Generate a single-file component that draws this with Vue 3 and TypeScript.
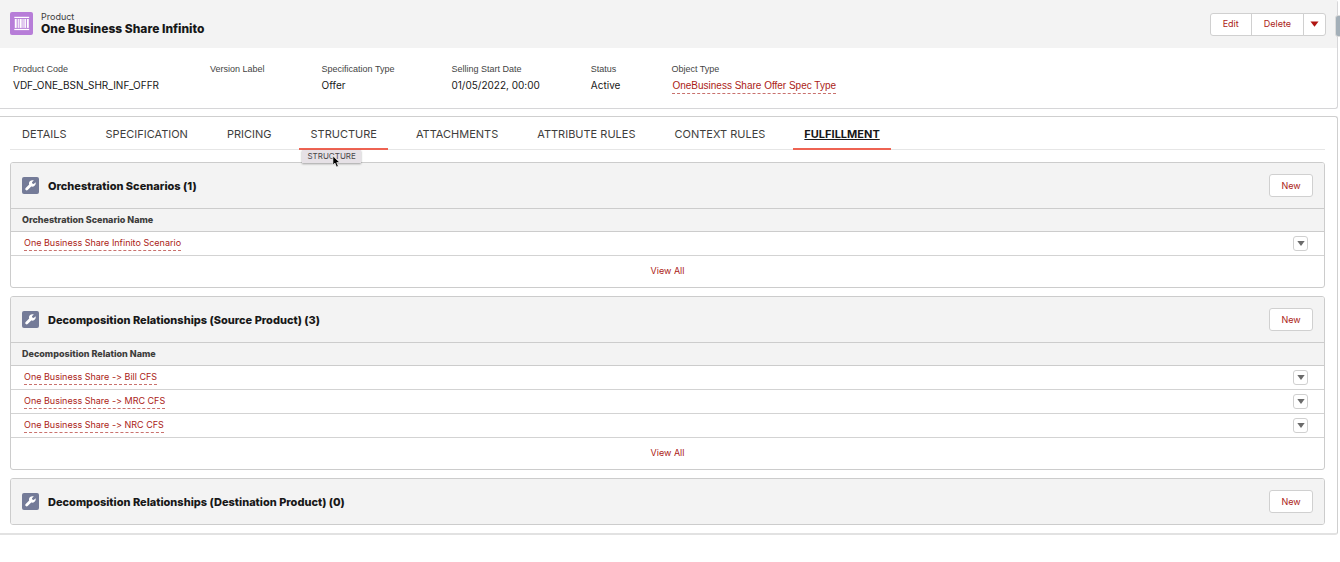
<script setup lang="ts">
interface Field {
  label: string
  value: string
  link?: boolean
}

interface RelatedList {
  title: string
  column?: string
  rows: string[]
}

const fields: Field[] = [
  { label: 'Product Code', value: 'VDF_ONE_BSN_SHR_INF_OFFR' },
  { label: 'Version Label', value: '' },
  { label: 'Specification Type', value: 'Offer' },
  { label: 'Selling Start Date', value: '01/05/2022, 00:00' },
  { label: 'Status', value: 'Active' },
  { label: 'Object Type', value: 'OneBusiness Share Offer Spec Type', link: true },
]

const tabs: string[] = [
  'DETAILS',
  'SPECIFICATION',
  'PRICING',
  'STRUCTURE',
  'ATTACHMENTS',
  'ATTRIBUTE RULES',
  'CONTEXT RULES',
  'FULFILLMENT',
]
const activeTab = 'FULFILLMENT'
const hoveredTab = 'STRUCTURE'

const lists: RelatedList[] = [
  {
    title: 'Orchestration Scenarios (1)',
    column: 'Orchestration Scenario Name',
    rows: ['One Business Share Infinito Scenario'],
  },
  {
    title: 'Decomposition Relationships (Source Product) (3)',
    column: 'Decomposition Relation Name',
    rows: [
      'One Business Share -> Bill CFS',
      'One Business Share -> MRC CFS',
      'One Business Share -> NRC CFS',
    ],
  },
  { title: 'Decomposition Relationships (Destination Product) (0)', rows: [] },
]
</script>

<template>
  <main class="page">
    <section class="record">
      <header class="record-head">
        <span class="record-icon">
          <svg viewBox="0 0 24 24" width="23" height="23" aria-hidden="true">
            <g fill="#fff">
              <rect x="4.500" y="5" width="15.500" height="1.300" />
              <rect x="4.500" y="17.600" width="15.500" height="1.300" />
              <rect x="5" y="7.300" width="2" height="9.300" />
              <rect x="8" y="7.300" width="1.200" height="9.300" />
              <rect x="10" y="7.300" width="2.200" height="9.300" />
              <rect x="13" y="7.300" width="1.200" height="9.300" />
              <rect x="15" y="7.300" width="1.600" height="9.300" />
              <rect x="17.600" y="7.300" width="2" height="9.300" />
            </g>
          </svg>
        </span>
        <div class="record-name">
          <span class="record-kind">Product</span>
          <h1>One Business Share Infinito</h1>
        </div>
        <div class="actions">
          <button type="button">Edit</button>
          <button type="button">Delete</button>
          <button type="button" class="more" aria-label="More actions">
            <svg viewBox="0 0 10 6" width="9" height="6" aria-hidden="true">
              <path d="M0.500 0.300h9L5 6z" fill="#b01512" />
            </svg>
          </button>
        </div>
      </header>
      <dl class="fields">
        <div v-for="field in fields" :key="field.label" class="field">
          <dt>{{ field.label }}</dt>
          <dd>
            <a v-if="field.link" href="#" class="ref">{{ field.value }}</a>
            <template v-else>{{ field.value }}</template>
          </dd>
        </div>
      </dl>
      <span class="side-handle" aria-hidden="true"></span>
    </section>

    <section class="body">
      <nav class="tabs">
        <a
          v-for="tab in tabs"
          :key="tab"
          href="#"
          class="tab"
          :class="{ active: tab === activeTab, hovered: tab === hoveredTab }"
        >
          {{ tab }}
          <span v-if="tab === hoveredTab" class="tip" role="tooltip">
            {{ tab }}
            <svg class="pointer" viewBox="0 0 10 14" width="9" height="13" aria-hidden="true">
              <path
                d="M1 1v10l2.300-2.200 1.700 4.200 2-.800-1.700-4H8.700z"
                fill="#000"
                stroke="#fff"
                stroke-width="0.700"
              />
            </svg>
          </span>
        </a>
      </nav>

      <article v-for="list in lists" :key="list.title" class="panel">
        <header class="panel-head">
          <span class="panel-icon">
            <svg viewBox="0 0 18 18" width="17" height="17" aria-hidden="true">
              <path
                d="M14.400 5.500l-2 1.900-1.500-.400-.400-1.500 2-1.900c-1.500-.600-3.200-.200-4.200.900-.900 1-1.100 2.300-.700 3.500L3.900 11.700c-.600.600-.600 1.500 0 2.100.600.600 1.500.600 2.100 0l3.800-3.700c1.200.400 2.500.100 3.500-.800 1-1 1.500-2.500 1.100-3.800z"
                fill="#fff"
              />
            </svg>
          </span>
          <h2>{{ list.title }}</h2>
          <button type="button" class="new">New</button>
        </header>
        <template v-if="list.column">
          <table>
            <thead>
              <tr>
                <th scope="col" colspan="2">{{ list.column }}</th>
              </tr>
            </thead>
            <tbody>
              <tr v-for="row in list.rows" :key="row">
                <td><a href="#" class="ref">{{ row }}</a></td>
                <td class="menu-cell">
                  <button type="button" class="row-menu" :aria-label="`Actions for ${row}`">
                    <svg viewBox="0 0 8 5" width="8" height="5" aria-hidden="true">
                      <path d="M0.300 0h7.400L4 5z" fill="#6b6b6b" />
                    </svg>
                  </button>
                </td>
              </tr>
            </tbody>
          </table>
          <footer class="panel-foot"><a href="#">View All</a></footer>
        </template>
      </article>
    </section>
  </main>
</template>

<style>
body {
  margin: 0;
  background: #fff;
}
</style>

<style scoped>
.page {
  font-family: Inter, 'Liberation Sans', sans-serif;
  font-size: 9px;
  line-height: 14px;
  font-variant-ligatures: none;
  font-feature-settings: 'calt' 0;
  color: #181818;
  padding-right: 2px;
  overflow: hidden;
}

h1,
h2,
dl,
dd {
  margin: 0;
}

a {
  color: #ab1b16;
  text-decoration: none;
}

button {
  font: inherit;
  color: #ab1b16;
  background: #fff;
  border: 1px solid #d0d0d0;
  border-radius: 3px;
  padding: 0;
  cursor: pointer;
}

.record {
  position: relative;
  border: 1px solid #d6d6d8;
  border-width: 0 1px 1px 0;
  border-radius: 0 3px 3px 0;
}

.record-head {
  display: flex;
  align-items: center;
  box-sizing: border-box;
  height: 48px;
  padding: 0 11px 2px 10px;
  background: #f3f3f3;
}

.record-icon {
  display: flex;
  border-radius: 2px;
  background: #b77dd8;
}

.record-name {
  margin-left: 8px;
  display: flex;
  flex-direction: column;
}

.record-kind {
  line-height: 11px;
  color: #3c3c3c;
}

h1 {
  font-size: 12px;
  line-height: 14px;
  font-weight: 800;
}

.actions {
  display: flex;
  margin-left: auto;
  padding-top: 2px;
}

.actions button {
  height: 23px;
  padding: 0 12px;
  border-radius: 0;
  margin-left: -1px;
}

.actions button:first-child {
  border-radius: 3px 0 0 3px;
}

.actions .more {
  padding: 0 6px;
  border-radius: 0 3px 3px 0;
}

.side-handle {
  position: absolute;
  top: 15px;
  right: -4px;
  width: 4px;
  height: 20px;
  border: 1px solid #dcdcdc;
  border-radius: 3px 0 0 3px;
  background: #a3afb8;
}

.fields {
  display: flex;
  height: 60px;
  box-sizing: border-box;
  padding: 14px 12px 0 13px;
}

.field {
  padding-right: 51px;
  white-space: nowrap;
}

.field:nth-child(2),
.field:nth-child(3) {
  padding-right: 57px;
}

dt {
  font-family: 'Liberation Sans', sans-serif;
  color: #444;
}

dd {
  margin-top: 2px;
  font-size: 10px;
}

dd .ref {
  margin-left: 1px;
  padding-top: 1px;
  font-family: 'Liberation Sans', sans-serif;
}

.ref {
  display: inline-block;
  border-bottom: 1px dashed #c9716d;
}

.body {
  margin-top: 7px;
  padding: 0 12px 8px 10px;
  border: 1px solid #cfcfcf;
  border-left: 0;
  border-bottom: 2px solid #e2e2e2;
  border-radius: 0 3px 3px 0;
}

.tabs {
  display: flex;
  gap: 17px;
  padding-left: 1px;
  margin-bottom: 12px;
  border-bottom: 1px solid #e6e6e6;
}

.tab {
  position: relative;
  padding: 9px 11px 6px;
  border-bottom: 2px solid transparent;
  margin-bottom: -1px;
  font-size: 11px;
  line-height: 16px;
  color: #3e3e3c;
  white-space: nowrap;
}

.tab.active,
.tab.hovered {
  border-bottom-color: #ee6352;
}

.tab.active {
  font-weight: 700;
  color: #181818;
  text-decoration: underline;
}

.tip {
  position: absolute;
  top: 33px;
  left: 3px;
  z-index: 1;
  padding: 0 5px;
  font-size: 8px;
  line-height: 13px;
  color: #4a484a;
  background: #e6e1e6;
  box-shadow: 0 1px 2px rgba(0, 0, 0, 0.35);
}

.pointer {
  position: absolute;
  left: 30px;
  top: 5px;
}

.panel {
  border: 1px solid #cccccc;
  border-radius: 3px;
  overflow: hidden;
}

.panel + .panel {
  margin-top: 8px;
}

.panel-head {
  display: flex;
  align-items: center;
  height: 45px;
  padding: 0 11px;
  background: #f3f3f3;
}

.panel-icon {
  display: flex;
  border-radius: 2px;
  background: #747b98;
}

h2 {
  margin-left: 9px;
  font-size: 11px;
  line-height: 16px;
  font-weight: 800;
}

.new {
  width: 44px;
  height: 23px;
  margin-left: auto;
}

table {
  width: 100%;
  border-spacing: 0;
}

th {
  height: 22px;
  padding: 0 11px;
  border: 1px solid #cccccc;
  border-width: 1px 0;
  background: #f3f3f3;
  font-weight: 800;
  text-align: left;
  color: #3e3e3c;
}

td {
  height: 23px;
  padding: 0 0 0 13px;
  border-bottom: 1px solid #d3d3d3;
}

.menu-cell {
  width: 31px;
  padding: 0;
}

.row-menu {
  display: flex;
  align-items: center;
  justify-content: center;
  width: 15px;
  height: 15px;
}

.panel-foot {
  padding-bottom: 1px;
  line-height: 30px;
  text-align: center;
}
</style>
